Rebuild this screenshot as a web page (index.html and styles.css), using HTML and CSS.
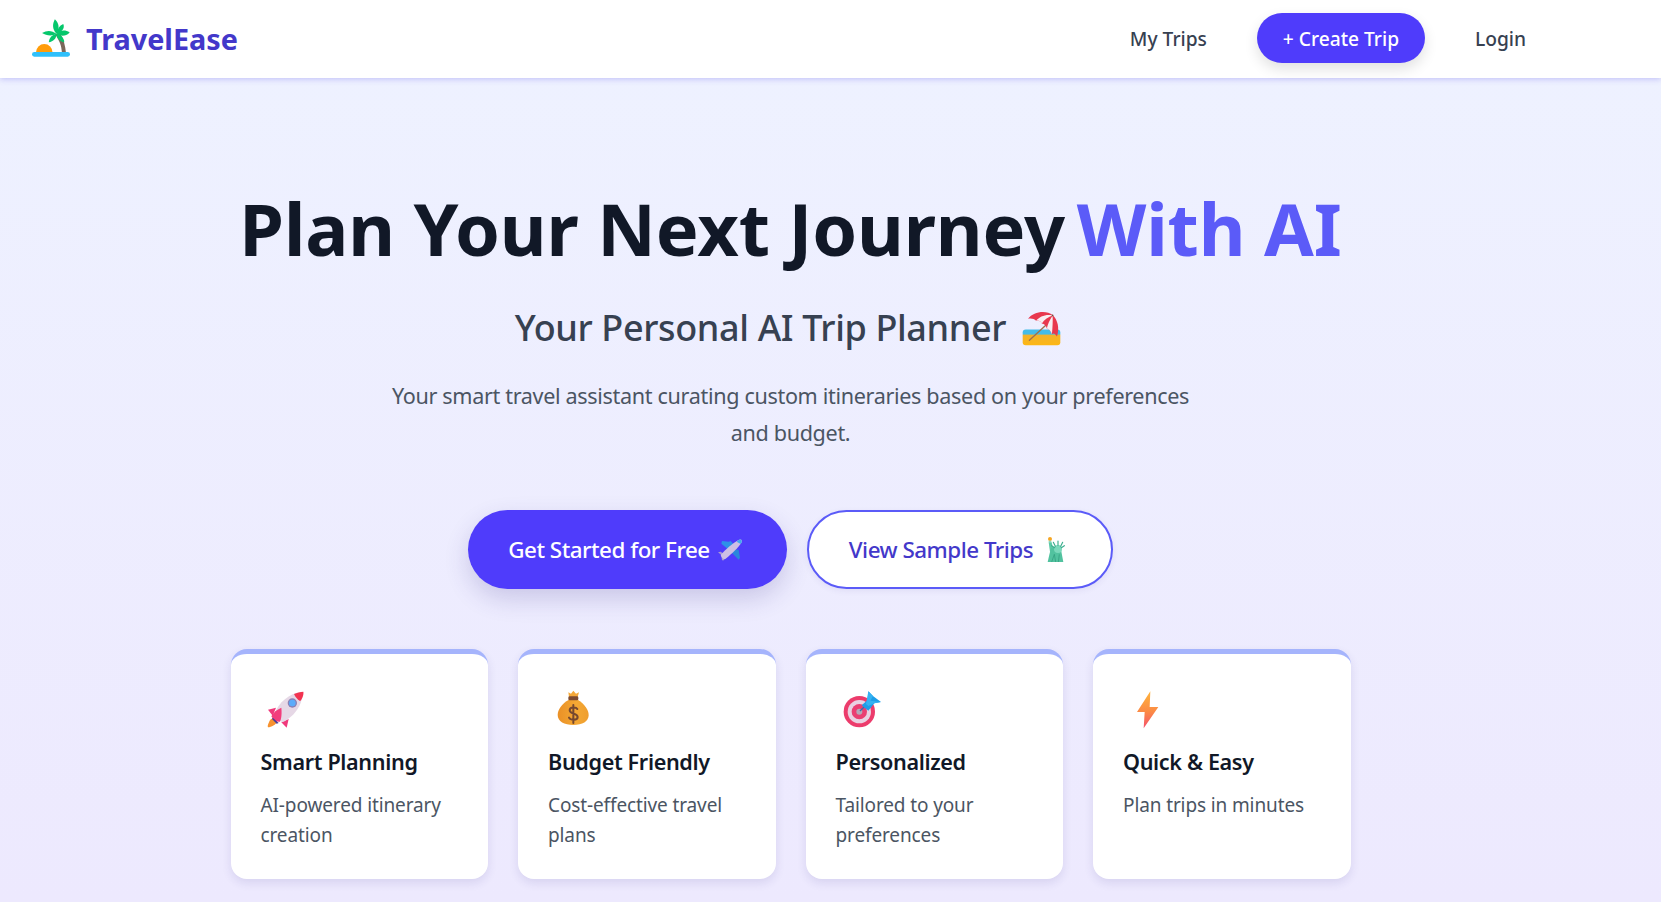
FILE: index.html
```html
<!DOCTYPE html>
<html lang="en">
<head>
<meta charset="utf-8">
<title>TravelEase</title>
<link rel="stylesheet" href="styles.css">
</head>
<body>
<div class="page">
  <header class="topbar">
    <a class="brand" href="#">
      <svg class="icon-brand" viewBox="37 28 113 113" aria-hidden="true">
        <path d="M120 70C131 88 136 108 138 128L126 128C125 108 119 92 106 74Z" fill="#7a675a"/>
        <path d="M49 127A24 24 0 0 1 98 127Z" fill="#ff9d0a"/>
        <rect x="37" y="126" width="113" height="14" rx="7" fill="#2fc0fb"/>
        <g fill="#05c76b">
          <path d="M110 72C96 58 98 42 105 29C117 40 120 56 110 72Z"/>
          <path d="M110 72C112 58 118 48 130 43C136 56 124 68 110 72Z"/>
          <path d="M110 72C122 60 136 60 149 68C138 80 122 80 110 72Z"/>
          <path d="M110 72C96 62 82 60 67 70C80 78 96 80 110 72Z"/>
          <path d="M110 72C124 76 132 84 133 97C120 96 110 86 110 72Z"/>
          <path d="M110 72C96 76 88 84 87 97C100 96 110 86 110 72Z"/>
        </g>
      </svg>
      <span class="brand-name">TravelEase</span>
    </a>
    <nav class="nav">
      <a class="nav-link" href="#">My Trips</a>
      <a class="nav-cta" href="#">+ Create Trip</a>
      <a class="nav-link" href="#">Login</a>
    </nav>
  </header>

  <main class="hero">
    <h1 class="headline">Plan Your Next Journey <span class="accent">With AI</span></h1>
    <h2 class="subhead">Your Personal AI Trip Planner
      <svg class="icon-umbrella" viewBox="60 60 125 110" aria-hidden="true">
        <defs>
          <linearGradient id="sand" x1="0" y1="0" x2="0" y2="1"><stop offset="0" stop-color="#45bce8"/><stop offset=".3" stop-color="#45bce8"/><stop offset=".34" stop-color="#f2b22c"/><stop offset="1" stop-color="#fdb714"/></linearGradient>
        </defs>
        <rect x="68" y="118" width="112" height="47" rx="9" fill="url(#sand)"/>
        <path d="M88 150L136 106" stroke="#a0704c" stroke-width="4" stroke-linecap="round"/>
        <path d="M84 86C100 63 140 60 157 75C173 90 178 115 170 139C164 130 160 128 155 132C152 122 146 116 140 115C138 106 132 101 125 100C120 92 114 90 108 92C102 86 94 84 84 86Z" fill="#e8384e"/>
        <path d="M157 76C135 72 118 80 108 92C114 90 120 92 125 100C132 88 145 80 157 76Z" fill="#f8eef2"/>
        <path d="M157 76C148 90 142 102 140 115C146 116 152 122 155 132C157 110 158 92 157 76Z" fill="#f8eef2"/>
        <circle cx="157" cy="76" r="2.5" fill="#6b4a3a"/>
      </svg>
    </h2>
    <p class="lead">Your smart travel assistant curating custom itineraries based on your preferences and budget.</p>
    <div class="actions">
      <a class="btn btn-primary" href="#">Get Started for Free
        <svg class="icon-plane" viewBox="30 30 75 66" aria-hidden="true">
          <path d="M62 38L68 36L86 56L62 62L40 44L42 36Z" fill="#2e90e8"/>
          <path d="M80 62L92 62L96 86L92 92L72 72Z" fill="#2a86dc"/>
          <path d="M30 70L38 68L52 78L48 94L42 94L40 78Z" fill="#a99bcf"/>
          <path d="M38 78C54 60 74 44 90 34C98 29 104 32 101 40C92 56 72 74 52 90C46 92 40 86 38 78Z" fill="#cdbfe4"/>
          <path d="M86 38L92 33C98 30 103 33 101 40L98 45Z" fill="#44a8f0"/>
        </svg>
      </a>
      <a class="btn btn-secondary" href="#">View Sample Trips
        <svg class="icon-statue" viewBox="24 30 75 75" aria-hidden="true">
          <ellipse cx="45" cy="36" rx="6" ry="6" fill="#f6a623"/>
          <rect x="41" y="41" width="8" height="5" fill="#8fd6bf"/>
          <path d="M41 46H50L56 74H45Z" fill="#5cc9a7"/>
          <path d="M38 105L47 66C54 56 72 56 78 68L85 105Z" fill="#52c29f"/>
          <circle cx="69" cy="66" r="12" fill="#7bd8bb"/>
          <g stroke="#3cae8e" stroke-width="3.5" stroke-linecap="round">
            <path d="M69 55V42M61 58L55 46M77 58L83 46M59 62L50 56M79 62L88 56"/>
          </g>
          <path d="M50 105L58 82L62 105M70 105L73 82" stroke="#2f9a7c" stroke-width="2" fill="none"/>
        </svg>
      </a>
    </div>
    <section class="features">
      <article class="card">
        <svg class="icon-card" viewBox="36 28 120 120" aria-hidden="true">
          <path d="M45 128C46 120 54 116 60 114L70 126C66 134 52 142 42 143C40 140 42 134 45 128Z" fill="#f7922f"/>
          <path d="M66 84L42 90L56 108Z" fill="#f0397c"/>
          <path d="M104 118L98 144L82 128Z" fill="#f0397c"/>
          <path d="M60 106C74 66 106 42 142 36C152 62 126 110 84 128Z" fill="#e6d8e6"/>
          <path d="M120 43C128 40 140 36 148 36C150 44 144 60 138 64C130 60 124 52 120 43Z" fill="#f23350"/>
          <circle cx="115" cy="70" r="14" fill="#8a80b4"/>
          <circle cx="115" cy="70" r="10" fill="#5cabfa"/>
          <path d="M52 110C58 98 68 90 82 84C84 100 82 118 78 126C68 128 58 122 52 110Z" fill="#f23d7c"/>
          <path d="M56 114L74 130L68 132L54 118Z" fill="#463a9a"/>
        </svg>
        <h3 class="card-title">Smart Planning</h3>
        <p class="card-text">AI-powered itinerary creation</p>
      </article>
      <article class="card">
        <svg class="icon-card" viewBox="26 28 120 120" aria-hidden="true">
          <defs>
            <linearGradient id="bag" x1="0" y1="0" x2="1" y2="0"><stop offset="0" stop-color="#ea9026"/><stop offset=".6" stop-color="#f4a834"/><stop offset="1" stop-color="#ef9e2e"/></linearGradient>
          </defs>
          <path d="M72 38L80 42L87 33L95 42L104 38L100 52H74Z" fill="#f5a838"/>
          <path d="M74 60C52 72 40 90 40 106C40 126 60 136 87 136C114 136 133 126 133 106C133 90 120 72 100 60Z" fill="url(#bag)"/>
          <rect x="72" y="50" width="30" height="12" rx="4" fill="#7d4a30"/>
          <path d="M99 88C96 82 76 80 76 92C76 104 100 100 100 112C100 124 78 122 74 114M87 76V130" fill="none" stroke="#76482f" stroke-width="6" stroke-linecap="round"/>
        </svg>
        <h3 class="card-title">Budget Friendly</h3>
        <p class="card-text">Cost-effective travel plans</p>
      </article>
      <article class="card">
        <svg class="icon-card" viewBox="30 27 120 120" aria-hidden="true">
          <circle cx="85" cy="95" r="47" fill="#ec3c6c"/>
          <circle cx="85" cy="95" r="35" fill="#e9d2e2"/>
          <circle cx="85" cy="95" r="23" fill="#ea3f72"/>
          <circle cx="85" cy="95" r="9" fill="#b4a8b8"/>
          <path d="M87 93L112 68" stroke="#3a6ea8" stroke-width="4"/>
          <path d="M92 76L110 60L112 34L126 48L150 66L130 70L112 92Z" fill="#1e9ee8"/>
          <path d="M105 72L112 34L126 48L118 62L150 66L130 70L112 78Z" fill="#35b2f2"/>
        </svg>
        <h3 class="card-title">Personalized</h3>
        <p class="card-text">Tailored to your preferences</p>
      </article>
      <article class="card">
        <svg class="icon-card" viewBox="25 28 120 120" aria-hidden="true">
          <defs>
            <linearGradient id="bolt" x1="0" y1="0" x2="0" y2="1"><stop offset="0" stop-color="#ffb43c"/><stop offset=".55" stop-color="#fb8a45"/><stop offset="1" stop-color="#f5506e"/></linearGradient>
          </defs>
          <path d="M92 35L52 97H75L72 146L116 82H90Z" fill="url(#bolt)"/>
        </svg>
        <h3 class="card-title">Quick &amp; Easy</h3>
        <p class="card-text">Plan trips in minutes</p>
      </article>
    </section>
  </main>
</div>
</body>
</html>
```

FILE: styles.css
```css
* { box-sizing: border-box; }

html, body { height: 100%; }

body {
  margin: 0;
  min-height: 902px;
  overflow: hidden;
  background: linear-gradient(180deg, #eef2ff 0%, #ede9fe 100%);
  font-family: "Noto Sans", "Open Sans", "Liberation Sans", sans-serif;
  color: #111827;
}

a { text-decoration: none; color: inherit; }

.page { width: 1581px; }

.topbar {
  position: relative;
  width: 1661px;
  height: 78px;
  padding: 0 135px 2px 32px;
  display: flex;
  align-items: center;
  justify-content: space-between;
  background: #fff;
  box-shadow: 0 1px 6px rgba(79, 70, 229, .3);
}

.brand { display: flex; align-items: center; gap: 16px; }
.icon-brand { width: 38px; height: 38px; flex: none; }
.brand-name { font-size: 28.8px; font-weight: 700; color: #4338ca; }

.nav { display: flex; align-items: center; gap: 50px; }
.nav-link { font-size: 19.2px; font-weight: 500; color: #374151; }
.nav-cta {
  display: flex;
  align-items: center;
  justify-content: center;
  width: 168px;
  height: 50px;
  border-radius: 25px;
  background: #4f3cfb;
  color: #fff;
  font-size: 19.2px;
  font-weight: 500;
  box-shadow: 0 6px 14px rgba(0, 0, 0, .12);
}

.hero {
  display: flex;
  flex-direction: column;
  align-items: center;
  padding-top: 107px;
}

.headline {
  margin: 0;
  font-size: 72px;
  line-height: 86px;
  font-weight: 700;
  letter-spacing: -.1px;
  white-space: nowrap;
  color: #111827;
}
.accent { margin-left: -7px; color: #5b5bf8; }

.subhead {
  display: flex;
  align-items: center;
  gap: 14px;
  margin: 35px 0 0;
  font-size: 36px;
  line-height: 44px;
  font-weight: 500;
  letter-spacing: -.37px;
  color: #374151;
}
.icon-umbrella { width: 42px; height: 37px; margin-right: 4px; flex: none; }

.lead {
  width: 830px;
  margin: 27px 0 0;
  font-size: 21.6px;
  line-height: 37px;
  font-weight: 400;
  letter-spacing: -.34px;
  text-align: center;
  color: #4b5563;
}

.actions { display: flex; gap: 20px; margin-top: 59px; }

.btn {
  display: flex;
  align-items: center;
  justify-content: center;
  gap: 10px;
  height: 79px;
  border-radius: 40px;
  font-size: 22.4px;
  font-weight: 500;
  letter-spacing: -.5px;
}
.btn-primary {
  width: 319px;
  gap: 8px;
  background: #4f3cfb;
  color: #fff;
  box-shadow: 0 10px 25px rgba(60, 50, 140, .2);
}
.btn-secondary {
  width: 306px;
  background: #fff;
  color: #4338ca;
  border: 2px solid #5b5bf8;
  box-shadow: 0 2px 6px rgba(60, 50, 140, .08);
}
.icon-plane { width: 25px; height: 22px; margin-right: 4px; flex: none; }
.icon-statue { width: 25px; height: 25px; margin-right: 3px; flex: none; }

.features {
  display: grid;
  grid-template-columns: repeat(4, 1fr);
  gap: 30px;
  width: 1120px;
  margin-top: 60px;
}

.card {
  height: 230px;
  padding: 35px 30px 0;
  background: #fff;
  border-top: 5px solid #a5b4fc;
  border-radius: 16px;
  box-shadow: 0 4px 10px rgba(60, 50, 140, .12);
}
.icon-card { display: block; width: 40px; height: 40px; margin: 0 0 18px 5px; }
.card-title {
  margin: 0;
  font-size: 21.6px;
  line-height: 30px;
  font-weight: 600;
  letter-spacing: -.35px;
  color: #111827;
}
.card-text {
  margin: 13px 0 0;
  font-size: 19px;
  line-height: 30px;
  font-weight: 400;
  letter-spacing: -.12px;
  color: #4b5563;
}
```
